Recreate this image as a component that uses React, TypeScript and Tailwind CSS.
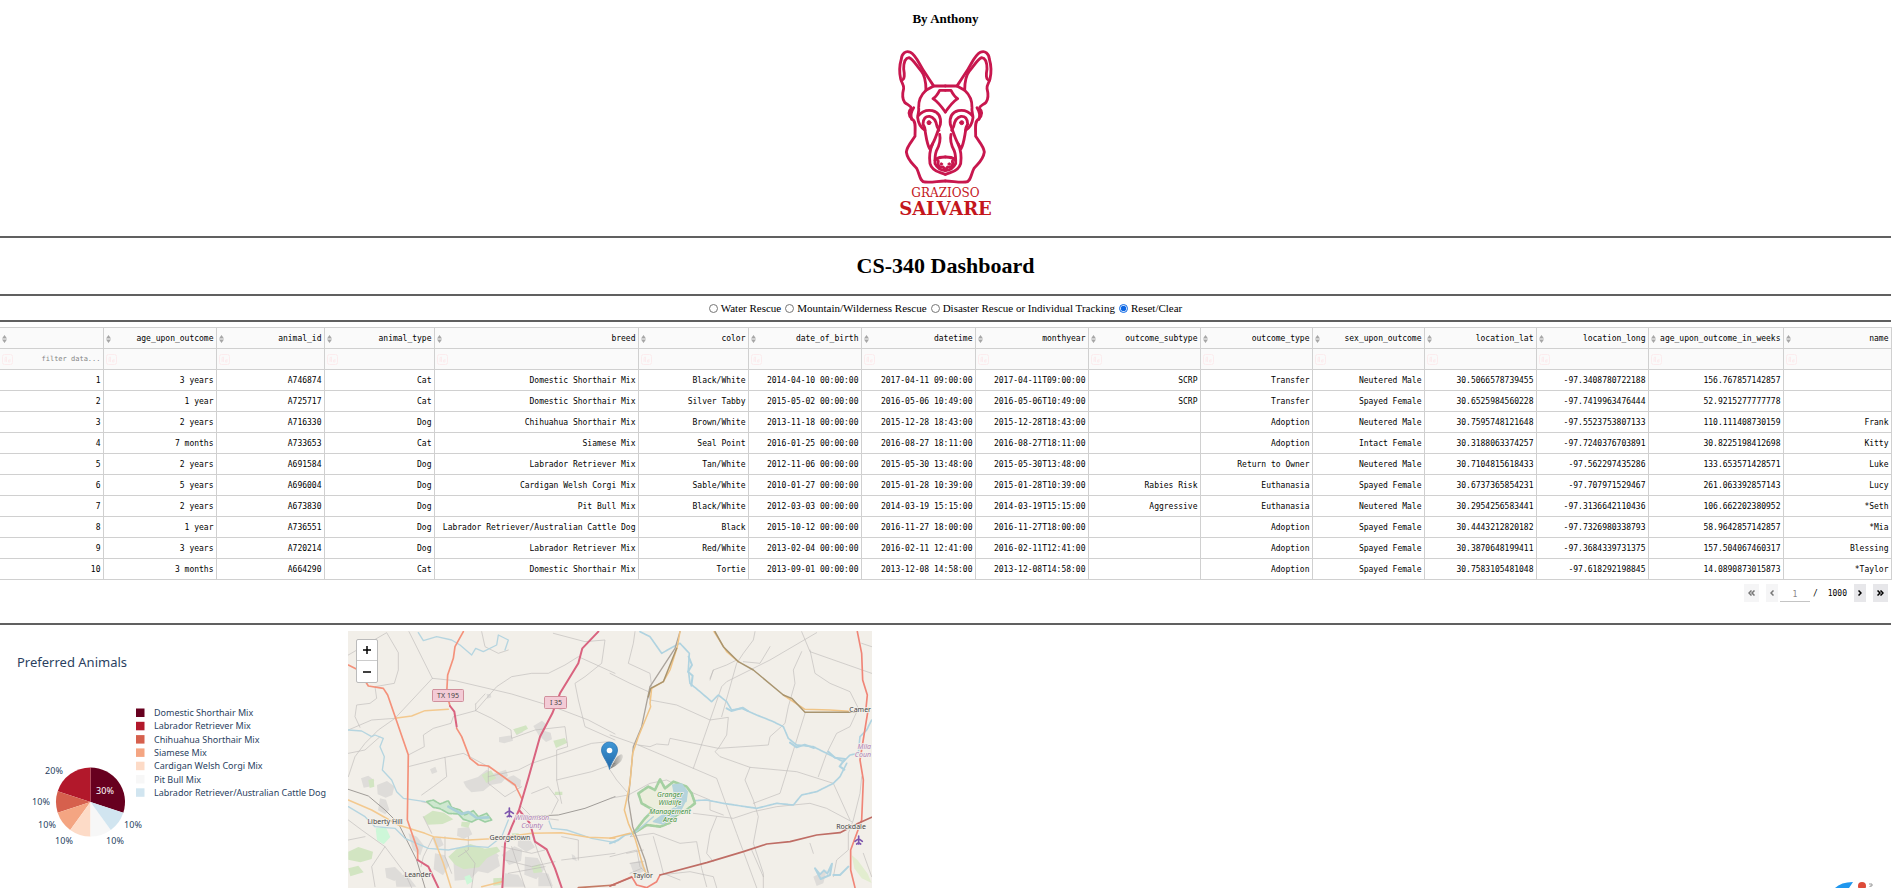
import React from "react";

const COLUMNS: [string, number][] = [
  ["", 103], ["age_upon_outcome", 113], ["animal_id", 108], ["animal_type", 110], ["breed", 204], ["color", 110],
  ["date_of_birth", 113], ["datetime", 114], ["monthyear", 113], ["outcome_subtype", 112], ["outcome_type", 112],
  ["sex_upon_outcome", 112], ["location_lat", 112], ["location_long", 112], ["age_upon_outcome_in_weeks", 135], ["name", 108],
];

const ROWS: string[][] = [
  ["1", "3 years", "A746874", "Cat", "Domestic Shorthair Mix", "Black/White", "2014-04-10 00:00:00", "2017-04-11 09:00:00", "2017-04-11T09:00:00", "SCRP", "Transfer", "Neutered Male", "30.5066578739455", "-97.3408780722188", "156.767857142857", ""],
  ["2", "1 year", "A725717", "Cat", "Domestic Shorthair Mix", "Silver Tabby", "2015-05-02 00:00:00", "2016-05-06 10:49:00", "2016-05-06T10:49:00", "SCRP", "Transfer", "Spayed Female", "30.6525984560228", "-97.7419963476444", "52.9215277777778", ""],
  ["3", "2 years", "A716330", "Dog", "Chihuahua Shorthair Mix", "Brown/White", "2013-11-18 00:00:00", "2015-12-28 18:43:00", "2015-12-28T18:43:00", "", "Adoption", "Neutered Male", "30.7595748121648", "-97.5523753807133", "110.111408730159", "Frank"],
  ["4", "7 months", "A733653", "Cat", "Siamese Mix", "Seal Point", "2016-01-25 00:00:00", "2016-08-27 18:11:00", "2016-08-27T18:11:00", "", "Adoption", "Intact Female", "30.3188063374257", "-97.7240376703891", "30.8225198412698", "Kitty"],
  ["5", "2 years", "A691584", "Dog", "Labrador Retriever Mix", "Tan/White", "2012-11-06 00:00:00", "2015-05-30 13:48:00", "2015-05-30T13:48:00", "", "Return to Owner", "Neutered Male", "30.7104815618433", "-97.562297435286", "133.653571428571", "Luke"],
  ["6", "5 years", "A696004", "Dog", "Cardigan Welsh Corgi Mix", "Sable/White", "2010-01-27 00:00:00", "2015-01-28 10:39:00", "2015-01-28T10:39:00", "Rabies Risk", "Euthanasia", "Spayed Female", "30.6737365854231", "-97.707971529467", "261.063392857143", "Lucy"],
  ["7", "2 years", "A673830", "Dog", "Pit Bull Mix", "Black/White", "2012-03-03 00:00:00", "2014-03-19 15:15:00", "2014-03-19T15:15:00", "Aggressive", "Euthanasia", "Neutered Male", "30.2954256583441", "-97.3136642110436", "106.662202380952", "*Seth"],
  ["8", "1 year", "A736551", "Dog", "Labrador Retriever/Australian Cattle Dog", "Black", "2015-10-12 00:00:00", "2016-11-27 18:00:00", "2016-11-27T18:00:00", "", "Adoption", "Spayed Female", "30.4443212820182", "-97.7326980338793", "58.9642857142857", "*Mia"],
  ["9", "3 years", "A720214", "Dog", "Labrador Retriever Mix", "Red/White", "2013-02-04 00:00:00", "2016-02-11 12:41:00", "2016-02-11T12:41:00", "", "Adoption", "Spayed Female", "30.3870648199411", "-97.3684339731375", "157.504067460317", "Blessing"],
  ["10", "3 months", "A664290", "Cat", "Domestic Shorthair Mix", "Tortie", "2013-09-01 00:00:00", "2013-12-08 14:58:00", "2013-12-08T14:58:00", "", "Adoption", "Spayed Female", "30.7583105481048", "-97.618292198845", "14.0890873015873", "*Taylor"],
];

const SLICES = [
  { label: "Domestic Shorthair Mix", color: "#67001f", from: 0, to: 108 },
  { label: "Labrador Retriever Mix", color: "#b2182b", from: 288, to: 360 },
  { label: "Chihuahua Shorthair Mix", color: "#d6604d", from: 252, to: 288 },
  { label: "Siamese Mix", color: "#f4a582", from: 216, to: 252 },
  { label: "Cardigan Welsh Corgi Mix", color: "#fddbc7", from: 180, to: 216 },
  { label: "Pit Bull Mix", color: "#f7f7f7", from: 144, to: 180 },
  { label: "Labrador Retriever/Australian Cattle Dog", color: "#d1e5f0", from: 108, to: 144 },
];

function slicePath(from: number, to: number) {
  const point = (deg: number) => {
    const a = (deg * Math.PI) / 180;
    return `${90.5 + 34.5 * Math.sin(a)} ${175 - 34.5 * Math.cos(a)}`;
  };
  return `M90.5 175L${point(from)}A34.5 34.5 0 0 1 ${point(to)}Z`;
}

const Rule = () => <hr className="h-[2px] border-0 bg-[#606060]" />;

function DogHalf() {
  return (
    <g>
      <path d="M253 257H218C207 240 198 226 186 208C172 186 164 164 148 156C134 149 122 160 121 176C115 196 115 218 119 236C122 248 130 256 128 264C124 280 122 294 131 306C140 314 150 316 151 324C141 334 143 346 153 356C166 362 162 384 162 408C152 424 138 438 136 455C140 482 158 492 167 504C176 520 176 545 192 545C216 547 230 542 253 542" />
      <path d="M121 240C132 238 131 222 128 206C128 190 132 173 144 172C158 178 166 196 180 211C192 226 195 244 195 270L218 257" />
      <path d="M195 270C182 282 172 300 173 322C175 332 170 342 170 352C172 370 182 384 192 390C196 412 198 432 206 445L215 430" />
      <path d="M158 322C150 334 149 348 152 357M172 346C184 332 200 328 214 331C234 336 241 350 238 372C232 386 226 410 215 430C206 450 204 470 207 490C211 504 224 513 238 517L253 522" />
      <path d="M186 372C186 354 194 347 206 348C220 351 226 366 228 378L234 390M186 372C190 379 193 384 192 390M236 402C240 420 236 434 226 452C221 466 222 484 222 490C228 502 240 510 253 511" />
      <path d="M222 480C230 470 240 470 253 470M232 482C228 496 236 502 244 500M246 500L253 508" />
      <path d="M253 270H236C230 282 224 290 216 295C230 304 238 314 253 335" />
      <circle cx="204" cy="367" r="6" fill="#c8174e" strokeWidth="3" />
      <circle cx="241" cy="491" r="4" fill="#c8174e" strokeWidth="2" />
    </g>
  );
}

function Logo() {
  return (
    <div className="flex flex-col items-center text-[#c4161c]">
      <svg className="h-[140px] w-[100px]" viewBox="105 140 300 420" fill="none" stroke="#c8174e" strokeWidth="8.500" strokeLinejoin="round" strokeLinecap="round" aria-label="Grazioso Salvare">
        <DogHalf />
        <g transform="translate(506 0) scale(-1 1)"><DogHalf /></g>
      </svg>
      <span className="font-['DejaVu_Serif',serif] text-[12px] leading-[13px]">GRAZIOSO</span>
      <span className="font-['DejaVu_Serif',serif] text-[18px] font-bold leading-[18px]">SALVARE</span>
    </div>
  );
}

const CaseIcon = () => (
  <svg className="h-[11px] w-[11px]" viewBox="0 0 11 11" fill="none" stroke="#fcecee" aria-hidden="true">
    <rect x=".5" y=".5" width="10" height="10" rx="2" />
    <path d="M3 8V4.500Q3 3 4.500 3V8M3 6H5M8 5V8H6.500V6H8" />
  </svg>
);

function DataTable() {
  return (
    <table className="w-full table-fixed border-collapse text-right font-['DejaVu_Sans_Mono',monospace] text-[8px] leading-[12px] text-black">
      <colgroup>
        {COLUMNS.map(([name, width]) => <col key={name} style={{ width }} />)}
      </colgroup>
      <thead>
        <tr className="h-[21px] bg-[#fafafa]">
          {COLUMNS.map(([name]) => (
            <th key={name} className="border border-l-0 border-[#d0d0d0] p-0 pr-[2px] pt-px font-normal">
              <div className="flex items-center justify-between">
                <button aria-label={`Sort by ${name || "index"}`} className="w-[5px] shrink-0 ml-[2px]">
                  <svg className="h-[8px] w-[5px]" viewBox="0 0 5 8" fill="#a6a6a6"><path d="M2.500 0L5 3.500H0ZM2.500 8L0 4.500H5Z" /></svg>
                </button>
                <span>{name}</span>
              </div>
            </th>
          ))}
        </tr>
        <tr className="h-[21px] bg-[#fafafa]">
          {COLUMNS.map(([name], i) => (
            <th key={name} className="border border-l-0 border-[#d0d0d0] p-0 pr-[2px] font-normal">
              <div className="flex items-center pl-[2px]">
                <CaseIcon />
                <input aria-label={`Filter ${name || "index"}`} placeholder={i === 0 ? "filter data..." : ""} className="h-[16px] w-0 min-w-0 flex-1 bg-transparent text-right text-[7px] placeholder:text-[#858585] focus:outline-none" />
              </div>
            </th>
          ))}
        </tr>
      </thead>
      <tbody>
        {ROWS.map((row) => (
          <tr key={row[0]} className="h-[21px]">
            {row.map((cell, i) => (
              <td key={i} className="whitespace-nowrap border border-l-0 border-[#d0d0d0] p-0 pr-[2px] pt-[2px]">{cell}</td>
            ))}
          </tr>
        ))}
      </tbody>
    </table>
  );
}

function PageButton({ label, d, width, off }: { label: string; d: string; width: number; off?: boolean }) {
  return (
    <button aria-label={label} className={`flex h-[18px] items-center justify-center px-1 ${off ? "bg-[#f5f5f6] text-[#777]" : "bg-[#e7e7ea] text-black"}`}>
      <svg className="h-[6px]" style={{ width }} viewBox={`0 0 ${width} 6`} fill="none" stroke="currentColor" strokeWidth="1.500"><path d={d} /></svg>
    </button>
  );
}

function Pagination() {
  return (
    <div className="flex items-center justify-end pr-[3px] pt-[4px] font-['DejaVu_Sans_Mono',monospace] text-[8px] text-black">
      <PageButton label="First page" off width={7} d="M3.500 .500L1 3L3.500 5.500M6.500 .500L4 3L6.500 5.500" />
      <span className="w-[7px]" />
      <PageButton label="Previous page" off width={4} d="M3.500 .500L1 3L3.500 5.500" />
      <input aria-label="Page" placeholder="1" className="ml-[2px] h-[18px] w-[30px] border-b border-[#c4c4c4] pt-[3px] text-center placeholder:text-[#888] focus:outline-none" />
      <span className="px-[3px] pt-[2px]">/</span>
      <span className="px-[7px] pt-[2px]">1000</span>
      <PageButton label="Next page" width={4} d="M.500 .500L3 3L.500 5.500" />
      <span className="w-[7px]" />
      <PageButton label="Last page" width={7} d="M.500 .500L3 3L.500 5.500M3.500 .500L6 3L3.500 5.500" />
    </div>
  );
}

function PieChart() {
  const outside: [string, number, number][] = [["20%", 54, 147], ["10%", 41, 178], ["10%", 47, 201], ["10%", 64, 217], ["10%", 115, 217], ["10%", 133, 201]];
  return (
    <svg className="h-[256px] w-[348px] shrink-0 font-['Noto_Sans',sans-serif] text-[9px]" viewBox="0 -2 348 256" fill="#2a3f5f">
      <text x="17" y="40" className="text-[13px]">Preferred Animals</text>
      {SLICES.map((s, i) => (
        <g key={s.label}>
          <path d={slicePath(s.from, s.to)} fill={s.color} />
          <rect x="136" y={81.5 + i * 13.3} width="8.500" height="8.500" fill={s.color} />
          <text x="154" y={89 + i * 13.3}>{s.label}</text>
        </g>
      ))}
      <text x="105" y="167" textAnchor="middle" fill="#fff">30%</text>
      {outside.map(([t, x, y], i) => <text key={i} x={x} y={y} textAnchor="middle">{t}</text>)}
    </svg>
  );
}

const PATCHES_GREY = "M48 475l22 -8 18 14 -8 18 -24 4zM96 495l30 -12 22 16 -6 26 -20 8 -24 -10zM105 535l18 4 10 30 -12 14 -22 -12zM355 485l44 -14 26 -22 20 12 38 -12 6 18 -20 22 -32 6 -22 18 -36 4 -16 -16zM462 352l38 -6 4 16 -26 8 -16 -4zM505 328l26 -6 4 14 -20 10zM565 318l26 -16 12 10 -6 20 20 6 4 20 -18 8 -22 -20zM425 222l12 0 2 10 -12 4zM478 476l28 -10 22 14 -2 24 -24 -8zM255 448l16 -8 6 16 -16 6zM190 640l26 10 20 26 -10 30 -22 -16zM262 655l24 -4 10 24 -22 12zM338 625l34 -4 10 22 -26 14 -20 -10zM270 700l30 6 12 30 -18 30 -28 -18zM325 720l50 12 34 -20 48 -8 8 34 -36 22 -30 -6 -22 24 -48 4zM395 690l44 -6 24 24 -30 14zM470 705l38 -26 24 10 -4 34 -36 12zM520 650l34 8 16 24 -26 14 -26 -18zM540 710l38 4 20 34 -24 30 -36 -14zM480 760l40 4 22 36h-70zM120 745l30 -4 22 22 -24 20 -24 -10zM150 770l34 -8 30 38h-60zM580 755l30 6 14 38h-44zM680 702l10 6 6 16 -14 -6z";
const PATCHES_GREEN = "M235 590l28 -18 34 6 28 20 -32 14 -44 2zM350 605l26 2 -6 16 -22 -4zM310 710l26 -24 40 -14 44 14 36 -6 10 14 -40 20 -24 28 -46 6 -26 -14zM10 695l30 -14 44 14 -4 22 -34 10 -36 -8zM10 745l30 -8 16 20 -40 12zM505 328l38 -12 6 10 -34 18zM625 362l34 -8 8 14 -34 16zM410 465l28 -14 16 24 -30 14zM70 480l16 -4 2 24 -14 4zM500 640l20 0 12 16 -26 6zM560 740l24 -8 8 24 -26 4zM445 775l28 -2 -6 22 -22 2zM630 515l22 0 0 10 -24 0z";
const ROADS_LEFT = "M10 105L125 38L160 98V150L148 190L90 200L95 235L75 250L35 255L30 290L45 322M10 330L80 300L150 295M10 400L60 390L105 350M10 470L30 410L60 370L100 330L150 295L262 175L192 35M262 175L330 182L500 222L630 262L730 300L810 342M392 272L455 200L500 170L560 160L610 160L660 135L700 110L810 160M392 272L325 290L318 310L265 325L235 345L238 380L190 405L190 440M392 252V272L440 295L498 330L500 355L570 330L660 320L668 380L635 390V480L650 550M420 222L392 252M410 35L420 80L460 100L490 90M625 40L720 65L780 60L770 130L720 170L690 190L700 240L720 320L810 360M190 440L300 412L305 470L265 500L230 525M300 412L355 400L430 440L430 490L480 530L530 500M430 470L520 450L560 430L650 400L740 370L790 365M635 480L740 455L810 430M560 520L610 500L640 540L620 580M530 560L560 590L640 600M10 600L50 630L120 680L150 720L180 760L200 803M60 650L10 660M120 680L80 740L90 800M300 650V710L320 760M370 650V690L340 710M265 650L235 710L228 740M470 680L560 700L600 690M480 720L560 740L630 725M500 680L540 803M560 640L580 700L620 803M490 760L600 740M650 650L700 660V720M650 720L810 700M360 690L390 730L380 803M230 545L300 560M235 590L260 640";
const ROADS_RIGHT = "M75 35L70 70L55 130L120 160L125 200L115 235M0 160L60 190L115 215L120 240L200 255L300 300L355 292L350 345L325 385L180 355L175 375L140 372L120 380L85 375L0 345M85 375L250 445L320 475L380 640L440 803M250 445L335 200L350 185L480 120L620 38M335 290L380 130L400 100L430 60L435 35M300 175L310 150L350 135L380 120M310 150L300 180M400 125L450 130L480 80M575 35L600 95L785 160M575 95L550 150L555 190L535 260L525 310L480 350L475 375L325 385L315 395L330 410L420 442L560 455L670 490L720 600M600 90L615 160L660 190L720 215L745 265M745 265L720 320L680 340L650 400L625 470M585 280L510 520L430 550M420 442L405 480L430 540L445 590L430 670L460 760V803M0 535L55 525L120 490L170 480L240 515L300 540V570L340 585M250 580L370 595L430 575L500 560L600 550L650 565L725 605M320 590L300 640L290 700L310 725M120 600L60 650L130 640L210 670L260 665L275 745L290 800M0 450L20 480L50 515M130 650L150 720L160 760L210 780M150 765L240 755L310 770L320 803M425 690L460 770M600 670L610 700M755 470L750 520L730 600L715 640L715 690L680 720L670 770M760 700L785 770M0 710L80 690L90 740L110 760M50 700L100 690M60 730L100 725M60 760L95 745M755 70L785 80";

function MapCanvas() {
  return (
    <svg className="absolute inset-0 h-full w-full" viewBox="0 0 524 257" preserveAspectRatio="xMinYMin slice" fill="none" strokeLinejoin="round" strokeLinecap="round">
      <defs>
        <linearGradient id="pin" x1="0" y1="0" x2="0" y2="1"><stop offset="0" stopColor="#3f97d6" /><stop offset="1" stopColor="#2369a8" /></linearGradient>
        <linearGradient id="pinShadow" x1="0" y1="0" x2="1" y2="0"><stop offset="0" stopColor="#000" stopOpacity=".5" /><stop offset="1" stopColor="#000" stopOpacity=".08" /></linearGradient>
      </defs>
      <rect width="524" height="257" fill="#f2efe9" />
      <g transform="translate(-3 -11) scale(.333333)" strokeWidth="4">
        <path d={PATCHES_GREY} fill="#dedcd9" />
        <path d={PATCHES_GREEN} fill="#d2e5c2" />
        <path d="M92 625l30 -4 14 30 -20 22 -20 -12zM358 770l16 -6 10 20 -18 10z" fill="#cdf7d8" />
        <path d={ROADS_LEFT} stroke="#bdbab8" strokeWidth="2.500" strokeOpacity=".75" />
        <path d="M10 508L70 528L120 570L160 610L185 660L215 720L240 803M530 590L640 585L720 565L810 530" stroke="#a09c98" strokeWidth="3" />
        <path d="M220 38L235 62L275 50L320 60L345 75L380 105L392 85L415 95L455 75L460 45L490 60L480 90M10 330L50 333L80 350L90 345L115 355L105 380L118 410L112 450L140 480L155 515L175 535L240 545M10 560L60 590L90 620L150 625L180 655L250 685L310 690L370 678L430 682L470 650L490 600M610 598L620 625L665 630L740 655L810 668" stroke="#b5d5e0" strokeWidth="4" />
        <path d="M245 545L265 540L285 552L310 542L320 562L345 570L360 585L385 572L400 590L425 580L440 600L420 606L400 596L380 606L355 598L340 582L310 580L285 566L265 562Z" fill="#cfe8d0" stroke="#9dcfa3" strokeWidth="5" strokeDasharray="14 4" />
        <path d="M310 560L350 582L370 576L395 594L430 592" stroke="#a9d0d8" strokeWidth="8" />
        <path d="M10 540L80 570L160 615L240 640L265 650L370 660L440 656L560 640L650 638L730 652L810 655M265 650L295 730L318 803M150 295L200 288L240 272L310 268M410 800L470 785" stroke="#f3c98f" strokeWidth="4.500" />
        <path d="M10 135L40 150L70 198L115 205L128 225L190 405L187 600L218 690V720M355 35L330 80L325 115L308 165L305 220L315 258M335 325L350 350L375 415L400 435L430 438L510 495L530 535" stroke="#f4917a" strokeWidth="5" />
        <path d="M760 35L712 85L700 130L645 220L622 280L585 350L550 475L522 570L500 620L480 670L472 803M315 258L328 275L335 320M522 570L555 610L570 665L605 688L630 745L650 803M218 720L250 740L280 803" stroke="#d9637f" strokeWidth="6" />
        <path d="M700 803L810 795" stroke="#c47b65" strokeWidth="5" />
        <path d="M493 564v26M481 580l12 -8 12 8M487 590l6 -4 6 4" stroke="#7d55ad" strokeWidth="5" />
      </g>
      <g transform="translate(262 -11) scale(.333333)" strokeWidth="4">
        <path d="M60 730l36 -10 12 30 -34 18zM610 770l40 -20 -10 40 -20 8z" fill="#dedcd9" />
        <path d="M725 705l18 16 30 40 12 28 -30 -14 -22 -30z" fill="#e2edcf" />
        <path d={ROADS_RIGHT} stroke="#bdbab8" strokeWidth="2.500" strokeOpacity=".75" />
        <path d="M90 35L120 50L155 100L190 80L210 70L238 100L235 150L240 190L270 215L305 245L325 225L350 245L365 270L395 265L440 285L490 305L520 320L535 355L560 375L610 380L650 400L700 425L720 405L745 400M745 400L750 350L770 330L785 300M710 430L690 470L670 490L620 515L575 525L550 555L500 550L440 565L340 550L290 540L250 542" stroke="#b0d3e0" strokeWidth="5" strokeDasharray="9 2" />
        <path d="M540 368l20 14 24 -8 28 10M655 395l20 18 30 4 -16 22 14 10M350 265l14 8 34 -10 16 10M236 110l10 25 -12 20 14 12 -4 30M615 745l15 18 12 -12 10 10 14 -30 -6 34 -28 12zM715 740L690 765L670 765M0 670L25 660L45 645L70 640" stroke="#b0d3e0" strokeWidth="6" />
        <path d="M95 550L85 520L115 500L135 510L150 478L165 505L190 485L230 500L245 520L255 550L230 570L200 585L180 608L150 620L110 615L70 640L105 595L130 570Z" fill="#eceedd" stroke="#a5d0a2" strokeWidth="8" strokeDasharray="14 4" />
        <path d="M188 495L215 492L232 515L228 545L205 550L195 530ZM225 545L210 575L160 612L130 605L165 580L200 560ZM130 590L75 638" fill="#b5d4dc" stroke="#b5d4dc" />
        <path d="M210 35L195 85L120 200L95 320L70 380L55 540L68 620L105 720L115 760" stroke="#aaa39b" strokeWidth="4" />
        <path d="M210 35L202 80L180 150L160 185L125 205L120 250L122 260L85 350L68 400L60 490L43 570L55 610L75 655L100 740L110 765M312 35L350 95L385 125M520 225L585 268L660 270L740 275M0 655L60 640" stroke="#f0c486" strokeWidth="4.500" />
        <path d="M315 35L340 80L385 125L430 150L520 225L545 235L585 277H740M200 85L160 185L122 205L115 230" stroke="#a8946f" strokeWidth="4.500" />
        <path d="M742 35L755 100L758 180L772 225L768 265M775 265L750 420L760 480L755 600L722 690V750L735 803M0 798L65 770L80 795L110 803L140 785L150 765" stroke="#f08577" strokeWidth="5" />
        <path d="M150 765L290 728L400 695L470 672L540 665L620 645L690 638L740 612L785 592M0 798L65 772" stroke="#bf6d65" strokeWidth="5" />
        <path d="M746 648v24M735 664l11 -8 11 8M740 672l6 -4 6 4" stroke="#7d55ad" strokeWidth="5" />
      </g>
      <g className="font-['Noto_Sans',sans-serif] text-[7px]" fill="#444" stroke="none" textAnchor="middle">
        <g stroke="#d0909c"><rect x="84.500" y="58.500" width="31" height="12" rx="1" fill="#f3cbd6" /><rect x="196.500" y="65.500" width="22" height="12" rx="1" fill="#f3cbd6" /></g>
        <text x="100" y="67">TX 195</text>
        <text x="208" y="74">I 35</text>
        <g stroke="#f5f2ec" strokeWidth="1.500" paintOrder="stroke">
          <text x="37" y="193">Liberty Hill</text>
          <text x="162" y="209">Georgetown</text>
          <text x="70" y="246">Leander</text>
          <text x="295" y="247">Taylor</text>
          <text x="503" y="198">Rockdale</text>
          <text x="523" y="81" textAnchor="end">Camer</text>
          <g fill="#ae80b5" className="italic">
            <text x="184" y="189">Williamson</text><text x="184" y="197">County</text>
            <text x="523" y="118" textAnchor="end">Mila</text><text x="523" y="126" textAnchor="end">Coun</text>
          </g>
          <g fill="#3d9140" className="italic">
            <text x="322" y="166">Granger</text><text x="322" y="174">Wildlife</text><text x="322" y="183">Management</text><text x="322" y="191">Area</text>
          </g>
        </g>
      </g>
      <path d="M262 138L268 127Q275 120 275 126Q274 132 262 138Z" fill="url(#pinShadow)" />
      <path d="M261.500 138C260 131 253.500 125 253.500 119A8 8 0 0 1 269.500 119C269.500 125 263 131 261.500 138Z" fill="url(#pin)" stroke="#2d75b3" strokeWidth=".8" />
      <circle cx="261.500" cy="119.500" r="2.800" fill="#fff" />
    </svg>
  );
}

function MapView() {
  return (
    <div className="relative mt-[6px] w-[524px] shrink-0 overflow-hidden">
      <MapCanvas />
      <div className="absolute left-[8px] top-[8px] flex w-[22px] flex-col divide-y divide-[#ccc] overflow-hidden rounded-[2px] border border-[#bbb] bg-white text-black">
        {["M1 5H9M5 1V9", "M1 5H9"].map((d, i) => (
          <button key={d} aria-label={i ? "Zoom out" : "Zoom in"} className="flex h-[21px] items-center justify-center">
            <svg className="h-[10px] w-[10px]" viewBox="0 0 10 10" stroke="currentColor" strokeWidth="1.500"><path d={d} /></svg>
          </button>
        ))}
      </div>
    </div>
  );
}

export default function App() {
  const options = ["Water Rescue", "Mountain/Wilderness Rescue", "Disaster Rescue or Individual Tracking", "Reset/Clear"];
  return (
    <main className="relative flex min-h-screen flex-col overflow-hidden bg-white pr-1 font-['Liberation_Serif',serif] text-black">
      <header className="flex flex-col items-center pb-[18px] pt-[11px]">
        <p className="mb-[20px] text-[13px] font-bold leading-[16px]">By Anthony</p>
        <Logo />
      </header>
      <Rule />
      <h1 className="py-[15px] text-center text-[22px] font-bold leading-[26px]">CS-340 Dashboard</h1>
      <Rule />
      <fieldset className="flex items-center justify-center gap-[4px] py-[5px] text-[11px] leading-[14px]">
        {options.map((option, i) => (
          <label key={option} className="flex items-center gap-[3px]">
            <input type="radio" name="rescue" defaultChecked={i === 3} className="h-[9px] w-[9px] accent-[#0b66e4]" />
            {option}
          </label>
        ))}
      </fieldset>
      <Rule />
      <section className="pt-[5px]">
        <DataTable />
        <Pagination />
      </section>
      <div className="mt-[21px]"><Rule /></div>
      <section className="flex flex-1">
        <PieChart />
        <MapView />
      </section>
      <svg className="absolute bottom-0 right-[8px] h-[8px] w-[56px]" viewBox="0 0 56 8" aria-hidden="true">
        <path d="M4 8Q10 2 22 2L18 8Z" fill="#1f97ee" />
        <circle cx="31" cy="6" r="4" fill="#dd4b39" />
        <path d="M38 4h3v2h-2v1" fill="none" stroke="#999" />
      </svg>
    </main>
  );
}
